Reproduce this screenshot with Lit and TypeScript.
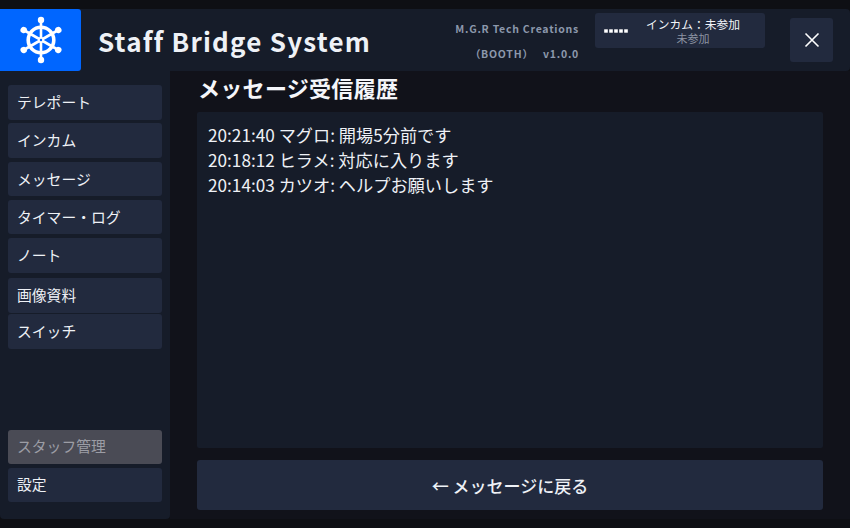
import { LitElement, html, css, svg } from "lit";
import { customElement } from "lit/decorators.js";

const spokes = [0, 60, 120, 180, 240, 300];

@customElement("app-root")
export class AppRoot extends LitElement {
  static styles = css`
    :host {
      display: flex;
      flex-direction: column;
      width: 850px;
      height: 528px;
      padding: 9px 0;
      box-sizing: border-box;
      background: #0e0f14;
      font-family: "Noto Sans CJK JP", "Noto Sans", sans-serif;
      color: #f1f4f9;
      overflow: hidden;
    }
    .header {
      height: 62px;
      flex: none;
      display: flex;
      align-items: center;
      background: #161c29;
      border-radius: 0 4px 4px 0;
    }
    .logo {
      width: 81px;
      height: 62px;
      flex: none;
      background: #0066ff;
      border-radius: 0 3px 3px 0;
      display: flex;
      align-items: center;
      justify-content: center;
    }
    .logo svg { width: 44px; height: 48px; display: block; }
    .brand {
      margin-left: 17px;
      font-size: 26px;
      font-weight: 700;
      letter-spacing: 1.2px;
      color: #eef1f6;
      flex: 1;
    }
    .credit {
      width: 140px;
      text-align: right;
      font-size: 10.5px;
      font-weight: 700;
      letter-spacing: 0.75px;
      color: #8c98ac;
      line-height: 25px;
      padding-top: 2px;
    }
    .intercom {
      margin-left: 16px;
      width: 170px;
      height: 35px;
      margin-top: -19px;
      background: #222a3e;
      border-radius: 3px;
      display: flex;
      align-items: center;
      box-sizing: border-box;
      padding-left: 9px;
    }
    .dots { width: 25px; height: 4px; display: block; flex: none; }
    .intercom-text {
      flex: 1;
      text-align: center;
      padding-right: 8px;
      display: flex;
      flex-direction: column;
    }
    .it1 { font-size: 11.75px; line-height: 15px; color: #f1f4f9; }
    .it2 { font-size: 11px; line-height: 15px; color: #8c93a2; }
    .close {
      margin-left: 25px;
      margin-right: 17px;
      width: 43px;
      height: 44px;
      background: #222a3e;
      border-radius: 3px;
      display: flex;
      align-items: center;
      justify-content: center;
    }
    .close svg { width: 16px; height: 16px; display: block; }
    .body { flex: 1; display: flex; min-height: 0; }
    .side {
      width: 170px;
      flex: none;
      background: #161c29;
      border-radius: 0 0 4px 4px;
      box-sizing: border-box;
      padding: 14px 8px 17.5px;
      display: flex;
      flex-direction: column;
    }
    .nav {
      height: 34.5px;
      flex: none;
      width: 154px;
      margin-bottom: 3.75px;
      box-sizing: border-box;
      background: #222a3e;
      border-radius: 3px;
      padding-left: 9px;
      font-size: 14.8px;
      line-height: 33.5px;
      color: #eef1f6;
      white-space: nowrap;
    }
    .nav.gap { margin-top: 1.75px; margin-bottom: 1.5px; }
    .spacer { flex: 1; }
    .nav.off { height: 34px; line-height: 32.5px; background: #4a4b55; color: #9c9da5; margin-bottom: 4px; }
    .nav.last { height: 34px; line-height: 32.5px; margin-bottom: 0; }
    .main {
      flex: 1;
      min-width: 0;
      box-sizing: border-box;
      padding: 0 27px 9px;
      display: flex;
      flex-direction: column;
      background: #11121a;
    }
    h1 {
      margin: 0;
      height: 41px;
      font-size: 22px;
      font-weight: 700;
      line-height: 33px;
      color: #f5f6fa;
      letter-spacing: 0.3px;
      padding-left: 1px;
    }
    .log {
      flex: 1;
      min-height: 0;
      background: #161c29;
      border-radius: 2px;
      padding: 10px 11px;
      font-size: 17.2px;
      line-height: 25px;
      color: #eef1f6;
    }
    .back {
      margin-top: 12px;
      height: 50px;
      flex: none;
      background: #222a3e;
      border-radius: 3px;
      display: flex;
      align-items: center;
      justify-content: center;
      font-size: 17px;
      font-weight: 500;
      color: #eef1f6;
    }
  `;

  render() {
    const wheel = svg`<svg viewBox="0 0 44 48" fill="none" stroke="#fff">
      <circle cx="22" cy="24" r="12.8" stroke-width="3.6"/>
      ${spokes.map((a) => svg`<g transform="rotate(${a} 22 24)">
        <line x1="22" y1="24" x2="22" y2="6" stroke-width="2.6"/>
        <circle cx="22" cy="4" r="3.2" fill="#fff" stroke="none"/>
      </g>`)}
      <circle cx="22" cy="24" r="3" fill="#fff" stroke="none"/>
      <circle cx="22" cy="24" r="1.2" fill="#0066ff" stroke="none"/>
    </svg>`;
    const dots = svg`<svg class="dots" viewBox="0 0 25 4" fill="#fff">
      ${[0, 1, 2, 3, 4].map((i) => svg`<rect x=${0.2 + i * 5} y="0.3" width="3.6" height="3.4"/>`)}
    </svg>`;
    return html`
      <div class="header">
        <div class="logo">${wheel}</div>
        <div class="brand">Staff Bridge System</div>
        <div class="credit">M.G.R Tech Creations<br />（BOOTH）&nbsp;&nbsp;&nbsp;v1.0.0</div>
        <div class="intercom">
          ${dots}
          <div class="intercom-text">
            <span class="it1">インカム：未参加</span>
            <span class="it2">未参加</span>
          </div>
        </div>
        <div class="close">
          <svg viewBox="0 0 16 16" stroke="#fff" stroke-width="1.6" fill="none"><path d="M1.5 1.5l13 13M14.5 1.5l-13 13"/></svg>
        </div>
      </div>
      <div class="body">
        <div class="side">
          <div class="nav">テレポート</div>
          <div class="nav">インカム</div>
          <div class="nav">メッセージ</div>
          <div class="nav">タイマー・ログ</div>
          <div class="nav">ノート</div>
          <div class="nav gap">画像資料</div>
          <div class="nav">スイッチ</div>
          <div class="spacer"></div>
          <div class="nav off">スタッフ管理</div>
          <div class="nav last">設定</div>
        </div>
        <div class="main">
          <h1>メッセージ受信履歴</h1>
          <div class="log">
            <div>20:21:40 マグロ: 開場5分前です</div>
            <div>20:18:12 ヒラメ: 対応に入ります</div>
            <div>20:14:03 カツオ: ヘルプお願いします</div>
          </div>
          <div class="back">← メッセージに戻る</div>
        </div>
      </div>
    `;
  }
}
